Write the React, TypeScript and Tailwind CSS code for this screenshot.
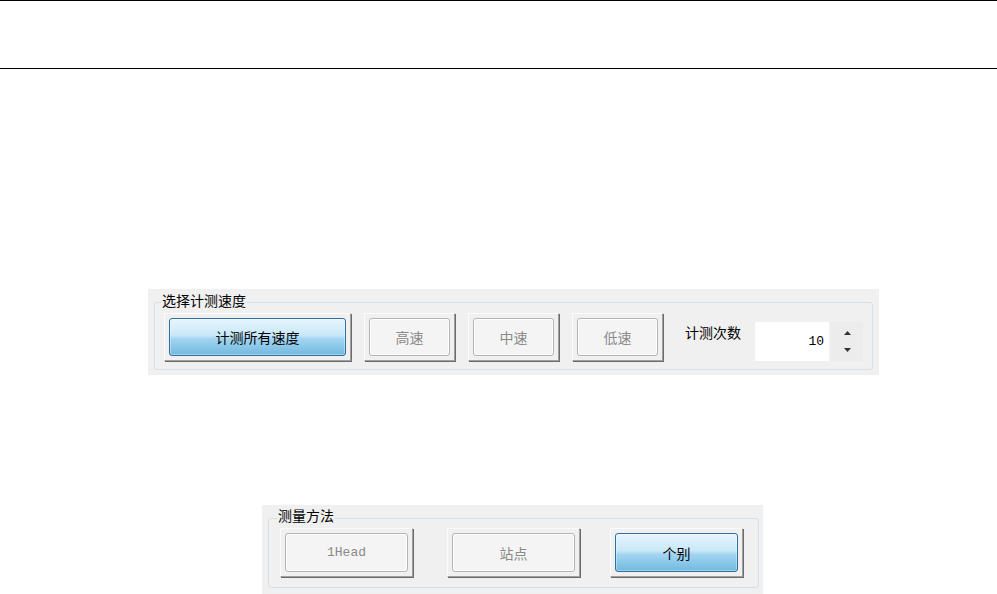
import React from "react"

const font = { fontFamily: '"Noto Sans CJK SC", "Noto Sans", sans-serif' }

type BtnProps = {
  label: string
  active?: boolean
  mono?: boolean
  className: string
}

// classic raised frame with a Win7-style rounded face inside
function FrameButton({ label, active, mono, className }: BtnProps) {
  return (
    <div
      className={`${className} shrink-0 flex border-l border-t border-[#fbfbfb] border-r border-b border-r-[#a0a0a0] border-b-[#a0a0a0] shadow-[1px_1px_0_#6b6b6b] p-[4px]`}
    >
      {active ? (
        <div className="flex-1 flex items-center justify-center rounded-[3px] border border-[#2f6f9f] bg-[linear-gradient(to_bottom,#e6f5fd_0%,#c9e8f8_45%,#a2d5f1_55%,#72b9df_100%)] shadow-[inset_0_0_0_1px_rgba(255,255,255,0.35)] text-[14px] leading-[16px] text-black">
          {label}
        </div>
      ) : (
        <div
          className={`flex-1 flex items-center justify-center rounded-[3px] border border-[#b2b6b9] bg-[#f4f4f4] shadow-[inset_0_0_0_1px_#fdfdfd] text-[#8a8a8a] ${
            mono ? "text-[13px] leading-[16px]" : "text-[14px] leading-[16px]"
          }`}
          style={mono ? { fontFamily: '"Liberation Mono", monospace' } : undefined}
        >
          {label}
        </div>
      )}
    </div>
  )
}

function Spinner() {
  return (
    <div className="ml-[2px] w-[32px] h-[39px] bg-[#ececec] flex flex-col items-center justify-center gap-[13px]">
      <svg width="7" height="4" viewBox="0 0 7 4">
        <path d="M3.5 0 L7 4 L0 4 Z" fill="#333" />
      </svg>
      <svg width="7" height="4" viewBox="0 0 7 4">
        <path d="M0 0 L7 0 L3.5 4 Z" fill="#333" />
      </svg>
    </div>
  )
}

export default function App() {
  return (
    <div className="w-[997px] h-[594px] bg-white overflow-hidden flex flex-col" style={font}>
      <div className="h-[69px] border-y border-black shrink-0" />

      {/* 选择计测速度 */}
      <div className="mt-[220px] ml-[148px] w-[731px] h-[86px] bg-[#f0f0f0] pt-[13px] pl-[6px] shrink-0">
        <div className="relative w-[719px] h-[68px] border border-[#d5dfe5] rounded-[3px]">
          <span className="absolute left-[6px] top-[-11px] px-[1px] bg-[#f0f0f0] text-[14px] leading-[16px] text-black">
            选择计测速度
          </span>
          <div className="flex items-start">
            <FrameButton label="计测所有速度" active className="ml-[9px] mt-[10px] w-[187px] h-[48px]" />
            <FrameButton label="高速" className="ml-[13px] mt-[10px] w-[91px] h-[48px]" />
            <FrameButton label="中速" className="ml-[13px] mt-[10px] w-[91px] h-[48px]" />
            <FrameButton label="低速" className="ml-[13px] mt-[10px] w-[91px] h-[48px]" />
            <div className="ml-[22px] mt-[19px] text-[14px] leading-[20px] text-black">计测次数</div>
            <div className="ml-[14px] mt-[19px] flex">
              <div
                className="w-[74px] h-[39px] bg-white flex items-center justify-end pr-[5px] text-[13px] text-black"
                style={{ fontFamily: '"Liberation Mono", monospace' }}
              >
                10
              </div>
              <Spinner />
            </div>
          </div>
        </div>
      </div>

      {/* 测量方法 */}
      <div className="mt-[130px] ml-[262px] w-[501px] h-[89px] bg-[#f0f0f0] pt-[13px] pl-[6px] shrink-0">
        <div className="relative w-[491px] h-[70px] border border-[#d5dfe5] rounded-[3px]">
          <span className="absolute left-[8px] top-[-12px] px-[1px] bg-[#f0f0f0] text-[14px] leading-[16px] text-black">
            测量方法
          </span>
          <div className="flex items-start">
            <FrameButton label="1Head" mono className="ml-[11px] mt-[9px] w-[133px] h-[49px]" />
            <FrameButton label="站点" className="ml-[34px] mt-[9px] w-[133px] h-[49px]" />
            <FrameButton label="个别" active className="ml-[30px] mt-[9px] w-[133px] h-[49px]" />
          </div>
        </div>
      </div>
    </div>
  )
}
